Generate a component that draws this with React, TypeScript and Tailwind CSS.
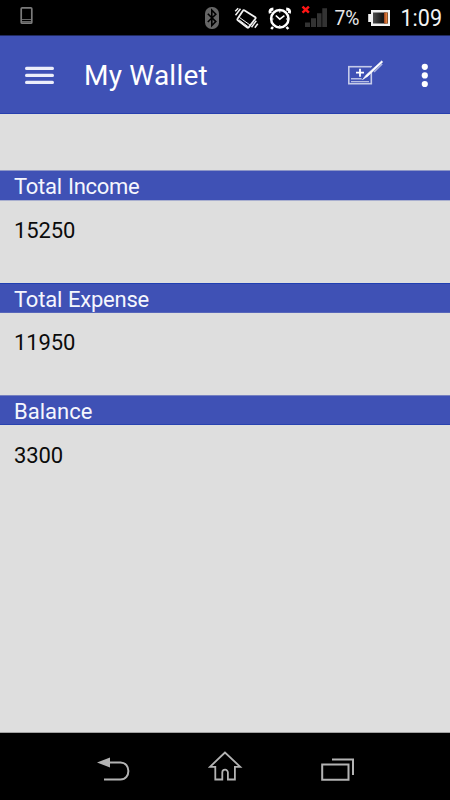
import React from "react";

function StatusBar() {
  return (
    <div className="flex h-[35px] shrink-0 bg-black">
      <svg width="334" height="35" viewBox="0 0 334 35" className="shrink-0" fill="none">
        <rect x="21.2" y="7.8" width="10.6" height="15.4" rx="1" stroke="#7b7b7b" strokeWidth="1.7" />
        <path d="M22 19.5h9M22 21.5h9" stroke="#666" strokeWidth="1" />
        <rect x="205" y="7" width="14" height="22" rx="6.5" fill="#666" />
        <path d="M207.8 13.8l8 7.8-4 4V10.2l4 4-8 7.8" stroke="#000" strokeWidth="1.6" />
        <g stroke="#f2f2f2">
          <path d="M244.2 10.2L255.3 17.2Q256 17.8 255.5 18.5L248.7 27.3Q248 28 247.2 27.5L237.8 20.2Q237 19.5 237.6 18.8L242.9 10.7Q243.4 9.8 244.2 10.2Z" strokeWidth="1.8" />
          <path d="M239.5 17.5L250 25M239 19.8l9 6.8" strokeWidth="1" />
          <path d="M235.2 11.2l3-3M235.5 15.2l5-6.5M251.5 27.2l4.8-6.5M254.8 27.8l3-4" strokeWidth="1.5" />
        </g>
        <g stroke="#fff">
          <circle cx="279.8" cy="18.8" r="8.7" strokeWidth="2.5" />
          <path d="M275.8 15.5l4 3.7 4.6-3.5" strokeWidth="1.6" />
          <path d="M279.8 11v1.7M279.8 25v1.5M272 19h1.5M286 19h1.5" strokeWidth="1" />
          <path d="M270.3 13.2Q269 9.2 273.4 9M289.3 13.2Q290.6 9.2 286.2 9" strokeWidth="3" />
          <path d="M273 27l-1.8 2M286.5 27l1.8 2" strokeWidth="2.6" />
        </g>
        <path d="M302.5 6.7l6.4 6M308.9 6.7l-6.4 6" stroke="#ff1515" strokeWidth="2.5" />
        <path d="M305 22.5h5V27h-5zM311 18.2h5V27h-5zM317 13.2h4.5V27H317zM322.3 8.3h4.7V27h-4.7z" fill="#333" />
      </svg>
      <svg width="116" height="35" viewBox="334 0 116 35" className="shrink-0">
        <defs>
          <linearGradient id="cell" x1="0" x2="1">
            <stop offset="0" stopColor="#4c4c4c" />
            <stop offset=".6" stopColor="#171717" />
            <stop offset="1" stopColor="#171717" />
          </linearGradient>
          <linearGradient id="charge" x1="0" x2="1">
            <stop offset="0" stopColor="#93401c" />
            <stop offset="1" stopColor="#ff9345" />
          </linearGradient>
        </defs>
        <text x="334.5" y="25.3" fontSize="19.5" fill="#e8e8e8" textLength="25" lengthAdjust="spacingAndGlyphs">7%</text>
        <path d="M371 10h19v16h-19v-4h-2.8v-8H371z" fill="#f2f2f2" />
        <rect x="373" y="12.5" width="15" height="11" fill="url(#cell)" />
        <rect x="384" y="12.5" width="3.5" height="11" fill="url(#charge)" />
        <text x="400.5" y="26.4" fontSize="23" fill="#f2f2f2" textLength="41.5" lengthAdjust="spacingAndGlyphs">1:09</text>
      </svg>
    </div>
  );
}

function AppBar() {
  return (
    <header className="flex h-[79px] shrink-0 items-center border-t border-b border-t-[#202a60] border-b-[#273fae] bg-[#3f51b5]">
      <svg width="30" height="20" viewBox="0 0 30 20" className="ml-[25px] shrink-0 text-[#eceefa]" stroke="currentColor" strokeWidth="3.2" strokeLinecap="round">
        <path d="M1.6 3.4h25.8M1.6 10.4h25.8M1.6 17.4h25.8" />
      </svg>
      <h1 className="ml-[29px] w-[263px] shrink-0 pt-[2px] text-[28px] leading-[34px] font-normal tracking-[0.22px] text-white">My Wallet</h1>
      <svg width="36" height="30" viewBox="347 59.5 36 30" className="shrink-0" fill="none">
        <rect x="348.8" y="66.2" width="22.5" height="17" stroke="#c5cbe9" strokeWidth="1.6" />
        <path d="M351 78.3h12M351 81.1h18" stroke="#b7bee3" strokeWidth="1.4" />
        <path d="M356 72.2h8M360 68.2v8" stroke="#fff" strokeWidth="1.8" />
        <path d="M363 79l4-6 15-13" stroke="#3f51b5" strokeWidth="4" />
        <path d="M362.7 79l3.5-4.6L381.8 60.3l.8 1.4-14.8 14z" fill="#fff" stroke="#fff" strokeWidth=".6" />
        <path d="M374 71.5l8.2-8" stroke="#a9b2de" strokeWidth="1.5" />
      </svg>
      <svg width="8" height="26" viewBox="0 0 8 26" className="ml-[38px] shrink-0 fill-white">
        <circle cx="3.8" cy="4.8" r="3.1" />
        <circle cx="3.8" cy="13.4" r="3.1" />
        <circle cx="3.8" cy="22" r="3.1" />
      </svg>
    </header>
  );
}

const sections = [
  { label: "Total Income", value: "15250", band: "h-[31px] border-t border-b border-t-[#8d96c6] border-b-[#a9afcf] tracking-[-0.27px] [word-spacing:1px]", body: "h-[82px] pt-[16px]" },
  { label: "Total Expense", value: "11950", band: "h-[30px] border-t border-b border-t-[#203fb2] border-b-[#5766ba] tracking-[-0.2px] [word-spacing:0.5px]", body: "h-[82px] pt-[16px]" },
  { label: "Balance", value: "3300", band: "h-[30px] border-t border-b border-t-[#7580c0] border-b-[#2842af]", body: "pt-[17px]" },
];

function NavigationBar() {
  return (
    <nav className="flex h-[68px] shrink-0 justify-center border-t border-[#a3a3a3] bg-black">
      <svg width="270" height="67" viewBox="90 733 270 67" fill="none" stroke="#b3b3b3" strokeWidth="2">
        <path d="M97 762.5l13-5v10z" fill="#b3b3b3" stroke="none" />
        <path d="M109 762.5h11.5c10.5 0 10.5 17 0 17H104" />
        <path d="M225 752.5l-15 14.3h5.3v12.7h7v-7a2.8 2.8 0 0 1 5.6 0v7h7v-12.7h5.3z" strokeWidth="1.8" />
        <path d="M322.2 764.5h26.3v15.3h-26.3zM332 759.5h21V775" strokeWidth="2" />
      </svg>
    </nav>
  );
}

export default function App() {
  return (
    <div className="flex h-[800px] w-[450px] flex-col overflow-hidden bg-[#dedede] font-[Roboto,sans-serif]">
      <StatusBar />
      <AppBar />
      <main className="flex min-h-0 flex-1 flex-col pt-[56px] text-[22px] leading-[28px]">
        {sections.map((s) => (
          <section key={s.label}>
            <h2 className={"flex items-center bg-[#3f51b5] pt-[3px] pl-[14px] text-[#f5f6fd] " + s.band}>{s.label}</h2>
            <p className={"pl-[14px] tracking-[-0.1px] text-[#0b0b0b] " + s.body}>{s.value}</p>
          </section>
        ))}
      </main>
      <NavigationBar />
    </div>
  );
}
